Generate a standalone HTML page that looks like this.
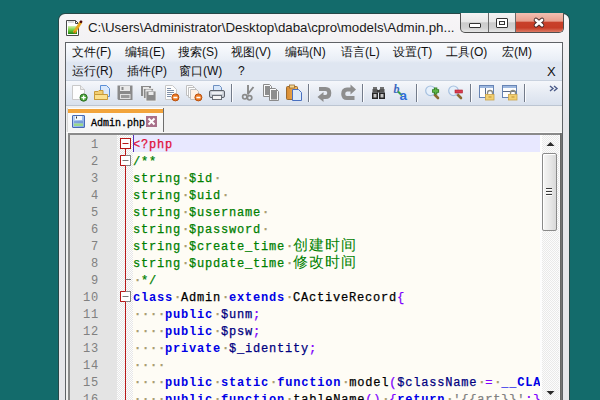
<!DOCTYPE html>
<html><head><meta charset="utf-8">
<style>
*{box-sizing:border-box;}
html,body{margin:0;padding:0;}
body{width:600px;height:400px;overflow:hidden;background:#136b6b;position:relative;font-family:"Liberation Sans",sans-serif;}
.abs{position:absolute;}
svg{position:absolute;overflow:visible;}
#win{position:absolute;left:58px;top:13px;width:512px;height:400px;border:1px solid #274848;border-bottom:none;border-radius:7px 7px 0 0;background:linear-gradient(#f7f5f7,#f1f0f2 40px,#e6e6ea 110px);}
#client{position:absolute;left:65px;top:42px;width:498px;height:370px;border:1px solid #5f6266;background:#f0f0f0;}
#menu{position:absolute;left:66px;top:43px;width:496px;height:37px;background:linear-gradient(#fbfcfe 0px,#e9eef6 17px,#dfe6f1 20px,#dfe6f1 38px);}
.mi{position:absolute;font-size:12px;line-height:17px;color:#111;white-space:nowrap;}
#tb{position:absolute;left:66px;top:80px;width:496px;height:26px;background:linear-gradient(#f5f7fb,#e6ebf3 50%,#d9e1ed);border-top:1px solid #c9d2df;border-bottom:1px solid #bcc5d2;}
.sep{position:absolute;top:84px;width:1px;height:18px;background:#737b8a;box-shadow:1px 0 0 #fbfcfe;}
#tabbar{position:absolute;left:66px;top:106px;width:496px;height:28px;background:#f0f0f0;}
#tab{position:absolute;left:67px;top:108px;width:97px;height:24px;background:linear-gradient(#fdfdfd,#f4f4f4);border-right:1px solid #6d6d6d;border-left:1px solid #d8d8d8;}
#tabo{position:absolute;left:68px;top:109px;width:95px;height:4px;background:#f2a43c;}
#editor{position:absolute;left:68px;top:133px;width:494px;height:280px;border-top:2px solid #8a8a8a;border-left:2px solid #8a8a8a;background:#fefcf5;}
#lnm{position:absolute;left:70px;top:135px;width:47px;height:270px;background:#e4e4e4;}
#fold{position:absolute;left:117px;top:135px;width:16px;height:270px;background:repeating-conic-gradient(#e6e6e6 0 25%,#fdfdfd 0 50%) 0 0/2px 2px;}
#hl{position:absolute;left:133px;top:135px;width:407px;height:17px;background:#e8e8ff;}
#caret{position:absolute;left:133px;top:135px;width:1px;height:17px;background:#5530b8;}
.ln{position:absolute;left:68px;width:31px;margin-top:2px;line-height:17px;text-align:right;font-family:"Liberation Mono",monospace;font-size:12px;letter-spacing:0.8px;color:#808080;}
#code{position:absolute;left:0;top:0;width:542px;height:400px;overflow:hidden;}
.cl{position:absolute;left:133px;margin-top:2px;line-height:17px;font-family:"Liberation Mono",monospace;font-size:12px;letter-spacing:0.8px;white-space:pre;color:#000;-webkit-text-stroke:0.25px currentColor;}
.c{color:#008000}
.k{color:#0000e6;font-weight:bold;-webkit-text-stroke:0}
.v{color:#000080}
.o{color:#8000ff}
.s{color:#808080}
.t{color:#e0103a}
.w{color:#a89c70;position:relative;left:1px;font-weight:bold}
.cj{-webkit-text-stroke:0;font-family:"Liberation Sans",sans-serif;font-size:15px;letter-spacing:1px;line-height:10px;vertical-align:top;position:relative;top:1px;}
#sb{position:absolute;left:540px;top:135px;width:20px;height:270px;background:repeating-conic-gradient(#e9e9e9 0 25%,#fcfcfc 0 50%) 0 0/2px 2px;border-left:2px solid #fdfdfd;border-right:1px solid #fafafa;}
#edr{position:absolute;left:560px;top:133px;width:2px;height:270px;background:linear-gradient(to right,#5e5e5e,#7c7c7c);}
#thumb{position:absolute;left:542px;top:153px;width:15px;height:78px;border:1px solid #8a8a8a;border-radius:2px;background:linear-gradient(to right,#f6f6f6,#e9e9e9 50%,#d9d9d9);box-shadow:inset 1px 1px 0 #fff;}
.grip{position:absolute;left:546px;width:6px;height:1px;background:#3a3a3a;box-shadow:0 1px 0 #fff;}
</style></head><body>
<div id="win"></div>
<!-- title icon -->
<svg style="left:66px;top:20px" width="17" height="16" viewBox="0 0 17 16">
<defs><linearGradient id="tg" x1="0" y1="0" x2="0" y2="1"><stop offset="0" stop-color="#d8f0b0"/><stop offset="0.5" stop-color="#70d040"/><stop offset="1" stop-color="#208010"/></linearGradient></defs>
<path d="M0.5 0.5 H9.5 L12.5 3.5 V15.5 H0.5 Z" fill="#fff" stroke="#4a4a4a"/>
<path d="M9.5 0.5 V3.5 H12.5" fill="none" stroke="#4a4a4a"/>
<path d="M2.5 2 H3.5 M4.5 2 H5.5 M6.5 2 H7.5" stroke="#777" stroke-width="1"/>
<rect x="2" y="6" width="9" height="8" fill="url(#tg)"/>
<path d="M8 12.8 L14.8 2.2" stroke="#e8a820" stroke-width="3"/>
<path d="M8 13.3 L9.2 11.3" stroke="#c07010" stroke-width="1.2"/>
<circle cx="15" cy="1.8" r="1.4" fill="#500808"/>
</svg>
<div class="abs" style="left:88px;top:20px;font-size:13.3px;line-height:16px;color:#1a1a1a;white-space:nowrap;">C:\Users\Administrator\Desktop\daba\cpro\models\Admin.ph...</div>
<!-- caption buttons -->
<div class="abs" style="left:460px;top:13px;width:104px;height:20px;border:1px solid #4f4f4f;border-top:none;border-radius:0 0 5px 5px;overflow:hidden;background:linear-gradient(#f4f4f4,#e8e8e8 45%,#cbcbcb 52%,#d2d2d2 80%,#e6e6e6);">
<div class="abs" style="left:27px;top:0;width:1px;height:19px;background:#6a6a6a;"></div>
<div class="abs" style="left:54px;top:0;width:1px;height:19px;background:#6a6a6a;"></div>
<div class="abs" style="left:55px;top:0;width:48px;height:19px;background:linear-gradient(#f2c0b2,#e8a08e 42%,#c8402a 50%,#c63c26 78%,#de7a64);"></div>
</div>
<div class="abs" style="left:469px;top:23px;width:12px;height:5px;border:1px solid #333;background:#fff;border-radius:1px;"></div>
<div class="abs" style="left:496px;top:18px;width:12px;height:10px;border:1px solid #333;background:#fff;border-radius:1px;"></div>
<div class="abs" style="left:499px;top:21px;width:6px;height:4px;border:1px solid #333;background:#f4f4f4;"></div>
<svg style="left:533px;top:17px" width="12" height="11" viewBox="0 0 12 11">
<path d="M3 3 L9 8.2 M9 3 L3 8.2" stroke="#4a2a2a" stroke-width="4.6" stroke-linecap="round"/>
<path d="M3 3 L9 8.2 M9 3 L3 8.2" stroke="#fff" stroke-width="2.8" stroke-linecap="round"/>
</svg>
<div id="client"></div>
<div id="menu"></div>
<div class="mi" style="left:72px;top:44px">文件(F)</div>
<div class="mi" style="left:125px;top:44px">编辑(E)</div>
<div class="mi" style="left:178px;top:44px">搜索(S)</div>
<div class="mi" style="left:231px;top:44px">视图(V)</div>
<div class="mi" style="left:285px;top:44px">编码(N)</div>
<div class="mi" style="left:341px;top:44px">语言(L)</div>
<div class="mi" style="left:393px;top:44px">设置(T)</div>
<div class="mi" style="left:446px;top:44px">工具(O)</div>
<div class="mi" style="left:502px;top:44px">宏(M)</div>
<div class="mi" style="left:72px;top:63px">运行(R)</div>
<div class="mi" style="left:127px;top:63px">插件(P)</div>
<div class="mi" style="left:179px;top:63px">窗口(W)</div>
<div class="mi" style="left:238px;top:63px">?</div>
<div class="mi" style="left:547px;top:63px;font-size:13px">X</div>
<div id="tb"></div>
<!-- new -->
<svg style="left:71px;top:84px" width="17" height="17" viewBox="0 0 17 17">
<path d="M1.5 1.5 H9.5 L13.5 5.5 V15.5 H1.5 Z" fill="#fdfdfd" stroke="#c9c9c9"/>
<path d="M9.5 1.5 V5.5 H13.5" fill="#ececec" stroke="#c9c9c9"/>
<circle cx="12.6" cy="13.6" r="3.6" fill="#4aa83a" stroke="#2f6e24"/>
<path d="M12.6 11.4 V15.8 M10.4 13.6 H14.8" stroke="#fff" stroke-width="1.4"/>
</svg>
<!-- open -->
<svg style="left:93px;top:84px" width="18" height="17" viewBox="0 0 18 17">
<path d="M7.5 1.5 H13.5 L16.5 4.5 V12.5 H7.5 Z" fill="#d9e8fb" stroke="#5b8fd6"/>
<path d="M1.5 7.5 H5 L6 6.5 H10 V15.5 H1.5 Z" fill="#f3cf72" stroke="#c89a3a"/>
<path d="M1.5 10.5 H14.5 V15.5 H1.5 Z" fill="#fbe08e" stroke="#c89a3a"/>
</svg>
<!-- save (disabled) -->
<svg style="left:117px;top:84px" width="17" height="17" viewBox="0 0 17 17">
<path d="M0.5 1.5 H15.5 V16 H1.5 L0.5 15 Z" fill="#8a8a8a"/>
<rect x="3" y="2" width="10" height="5" fill="#e9e9e9"/>
<rect x="4.5" y="3" width="2" height="3" fill="#8a8a8a"/>
<rect x="3" y="10" width="10.5" height="5" fill="#e2e2e2"/>
<rect x="4" y="11" width="8.5" height="3" fill="#9a9a9a"/>
</svg>
<!-- save all -->
<svg style="left:140px;top:84px" width="17" height="17" viewBox="0 0 17 17">
<rect x="1" y="2" width="10" height="10" fill="#8a8a8a"/>
<rect x="3" y="3" width="6" height="2" fill="#e9e9e9"/>
<rect x="3.5" y="4.5" width="10" height="10" fill="#8a8a8a" stroke="#f0f0f0" stroke-width="0.8"/>
<rect x="5.5" y="5.5" width="6" height="2" fill="#e9e9e9"/>
<rect x="6" y="7" width="10" height="10" fill="#8a8a8a" stroke="#f0f0f0" stroke-width="0.8"/>
<rect x="8.5" y="8" width="5" height="3" fill="#e9e9e9"/>
</svg>
<!-- close -->
<svg style="left:163px;top:84px" width="17" height="17" viewBox="0 0 17 17">
<path d="M2.5 1.5 H9.5 L13.5 5.5 V15.5 H2.5 Z" fill="#fdfdfd" stroke="#c8c8c8"/>
<path d="M4 4.5 H8 M4 6.5 H11 M4 8.5 H11 M4 10.5 H9 M4 12.5 H8" stroke="#8090a8" stroke-width="1"/>
<circle cx="12.4" cy="13.4" r="3.5" fill="#ee7a22" stroke="#b8500f"/>
<path d="M10.4 13.5 H14.4" stroke="#fff" stroke-width="1.6"/>
</svg>
<!-- close all -->
<svg style="left:185px;top:84px" width="17" height="17" viewBox="0 0 17 17">
<path d="M1.5 1.5 H7.5 L9.5 3.5 V11.5 H1.5 Z" fill="#fdfdfd" stroke="#c0c0c0"/>
<path d="M3.5 3.5 H9.5 L11.5 5.5 V13.5 H3.5 Z" fill="#fdfdfd" stroke="#c0c0c0"/>
<path d="M5.5 5.5 H11.5 L13.5 7.5 V15.5 H5.5 Z" fill="#fdf0e4" stroke="#c0c0c0"/>
<circle cx="13.4" cy="13.4" r="3.5" fill="#ee7a22" stroke="#b8500f"/>
<path d="M11.4 13.5 H15.4" stroke="#fff" stroke-width="1.6"/>
</svg>
<!-- print -->
<svg style="left:209px;top:84px" width="17" height="17" viewBox="0 0 17 17">
<path d="M4.5 1.5 H10.5 L12.5 3.5 V7 H4.5 Z" fill="#d6e6fa" stroke="#6d8fc0"/>
<rect x="0.5" y="6.5" width="15" height="7" rx="1.5" fill="#c9ced6" stroke="#5e636b"/>
<rect x="2.5" y="8" width="11" height="2" fill="#eef0f3"/>
<rect x="3.5" y="11.5" width="9" height="4" fill="#f4f4f4" stroke="#6a6f77"/>
</svg>
<div class="sep" style="left:231px"></div>
<!-- cut -->
<svg style="left:240px;top:84px" width="17" height="17" viewBox="0 0 17 17">
<path d="M8 1 V10.5 M13.5 3 L7.5 10.5" stroke="#8a8a8a" stroke-width="1.9"/>
<circle cx="4.8" cy="12.8" r="2.2" fill="none" stroke="#8a8a8a" stroke-width="1.7"/>
<circle cx="9.6" cy="13.8" r="2.2" fill="none" stroke="#8a8a8a" stroke-width="1.7"/>
</svg>
<!-- copy -->
<svg style="left:263px;top:84px" width="17" height="17" viewBox="0 0 17 17">
<path d="M0.5 0.5 H6.5 L8.5 2.5 V12.5 H0.5 Z" fill="#fafafa" stroke="#8a8a8a"/>
<rect x="2" y="2" width="5" height="9" fill="#8e8e8e"/>
<path d="M6.5 4.5 H12.5 L15.5 7.5 V16.5 H6.5 Z" fill="#fafafa" stroke="#8a8a8a"/>
<rect x="8" y="6" width="6" height="9.5" fill="#8e8e8e"/>
</svg>
<!-- paste -->
<svg style="left:286px;top:84px" width="17" height="17" viewBox="0 0 17 17">
<defs><linearGradient id="pg" x1="0" x2="1"><stop offset="0" stop-color="#d88a30"/><stop offset="1" stop-color="#f2b860"/></linearGradient></defs>
<rect x="0.5" y="2.5" width="11" height="13" rx="1" fill="url(#pg)" stroke="#9a6a30"/>
<rect x="3.5" y="1" width="5" height="3" fill="#f6d890" stroke="#9a6a30" stroke-width="0.8"/>
<path d="M6.5 5.5 H12.5 L15.5 8.5 V16.5 H6.5 Z" fill="#dceafa" stroke="#4a70c0"/>
</svg>
<div class="sep" style="left:308px"></div>
<!-- undo -->
<svg style="left:317px;top:84px" width="17" height="17" viewBox="0 0 17 17">
<path d="M2 5 H8.5 Q12.3 5 12.3 9 Q12.3 13 8.5 13 H6" fill="none" stroke="#8e8e8e" stroke-width="4"/>
<path d="M0.5 13 L6.5 8 V18 Z" fill="#8e8e8e"/>
</svg>
<!-- redo -->
<svg style="left:340px;top:84px" width="17" height="17" viewBox="0 0 17 17">
<path d="M14.5 14 H7 Q3.2 14 3.2 10 Q3.2 5.5 7 5.5 H11" fill="none" stroke="#8e8e8e" stroke-width="4"/>
<path d="M16 5.5 L10.5 0.5 V10.5 Z" fill="#8e8e8e"/>
</svg>
<div class="sep" style="left:362px"></div>
<!-- find -->
<svg style="left:371px;top:84px" width="17" height="17" viewBox="0 0 17 17">
<rect x="2" y="3" width="4" height="2.5" fill="#707070"/>
<rect x="9" y="3" width="4" height="2.5" fill="#707070"/>
<rect x="1.5" y="5" width="5" height="3.5" fill="#555"/>
<rect x="8.5" y="5" width="5" height="3.5" fill="#555"/>
<rect x="6" y="6" width="3" height="2.5" fill="#3a3a3a"/>
<rect x="1" y="8.5" width="6" height="6.5" fill="#262626"/>
<rect x="8" y="8.5" width="6" height="6.5" fill="#262626"/>
<rect x="2.5" y="10" width="3" height="3.5" fill="#c4c4c4"/>
<rect x="9.5" y="10" width="3" height="3.5" fill="#c4c4c4"/>
</svg>
<!-- replace -->
<svg style="left:393px;top:84px" width="18" height="17" viewBox="0 0 18 17">
<text x="0.5" y="9" font-family="Liberation Serif" font-style="italic" font-weight="bold" font-size="12" fill="#3a68c0">b</text>
<path d="M5 7.5 L9 11.5" stroke="#3aa040" stroke-width="2"/>
<text x="6.6" y="16.4" font-family="Liberation Sans" font-weight="bold" font-size="13.5" fill="#2e6ed8">a</text>
</svg>
<div class="sep" style="left:416px"></div>
<!-- zoom in -->
<svg style="left:425px;top:84px" width="17" height="17" viewBox="0 0 17 17">
<path d="M9 10 L13 14" stroke="#8a6a30" stroke-width="2.6" stroke-linecap="round"/>
<circle cx="5.5" cy="6.8" r="4.8" fill="#e6f0fb" stroke="#a6c0e0" stroke-width="1.2"/>
<path d="M10.6 3.5 V10.5 M7.1 7 H14.1" stroke="#2f7a20" stroke-width="3.4"/>
<path d="M10.6 4.3 V9.7 M7.9 7 H13.3" stroke="#5cb448" stroke-width="1.8"/>
</svg>
<!-- zoom out -->
<svg style="left:448px;top:84px" width="17" height="17" viewBox="0 0 17 17">
<path d="M9 10 L13 14" stroke="#8a6a30" stroke-width="2.6" stroke-linecap="round"/>
<circle cx="5.5" cy="6.8" r="4.8" fill="#e6f0fb" stroke="#a6c0e0" stroke-width="1.2"/>
<rect x="7" y="6" width="7.5" height="3" fill="#d83c50" stroke="#b02030" stroke-width="0.6"/>
</svg>
<div class="sep" style="left:470px"></div>
<!-- sync v -->
<svg style="left:479px;top:84px" width="17" height="17" viewBox="0 0 17 17">
<rect x="0.5" y="1.5" width="14" height="12" fill="#fdfdfd" stroke="#6784b4"/>
<rect x="1" y="2" width="13" height="2" fill="#9db8e0"/>
<path d="M6.5 4 V13" stroke="#5a6a88"/>
<path d="M8.5 10.5 V9 A2.5 2.5 0 0 1 13.5 9 V10.5" fill="none" stroke="#8a8a80" stroke-width="1.3"/>
<rect x="6.5" y="10.5" width="8.5" height="5.5" fill="#f3d070" stroke="#caa44a" stroke-width="0.8"/>
<rect x="9.5" y="12" width="3" height="2" fill="#d8b050"/>
</svg>
<!-- sync h -->
<svg style="left:502px;top:84px" width="17" height="17" viewBox="0 0 17 17">
<rect x="0.5" y="1.5" width="14" height="12" fill="#fdfdfd" stroke="#6784b4"/>
<rect x="1" y="2" width="13" height="2" fill="#9db8e0"/>
<path d="M1 7.5 H14" stroke="#5a6a88"/>
<path d="M8.5 10.5 V9 A2.5 2.5 0 0 1 13.5 9 V10.5" fill="none" stroke="#8a8a80" stroke-width="1.3"/>
<rect x="6.5" y="10.5" width="8.5" height="5.5" fill="#f3d070" stroke="#caa44a" stroke-width="0.8"/>
<rect x="9.5" y="12" width="3" height="2" fill="#d8b050"/>
</svg>
<div class="sep" style="left:524px"></div>
<svg style="left:549px;top:85px" width="10" height="7" viewBox="0 0 10 7">
<path d="M1 1 L4 3.5 L1 6 M5 1 L8 3.5 L5 6" fill="none" stroke="#4a5a88" stroke-width="1.4"/>
</svg>

<div id="tabbar"></div>
<div class="abs" style="left:66px;top:132px;width:496px;height:1px;background:#fbfbfb;"></div>
<div id="tab"></div>
<div id="tabo"></div>
<svg style="left:72px;top:115px" width="13" height="13" viewBox="0 0 13 13">
<defs><linearGradient id="fg" x1="0" y1="0" x2="1" y2="1"><stop offset="0" stop-color="#c4dcfa"/><stop offset="1" stop-color="#7ea6e2"/></linearGradient></defs>
<rect x="0.5" y="0.5" width="12" height="12" rx="0.5" fill="url(#fg)" stroke="#4768b4"/>
<rect x="3" y="1" width="7" height="4" fill="#f4f8fe"/>
<rect x="4" y="1.5" width="1" height="2" fill="#333"/>
<rect x="2" y="6.5" width="9" height="1" fill="#5a80c8"/>
<rect x="2" y="8.5" width="9" height="2.5" fill="#9ad888"/>
</svg>
<div class="abs" style="left:91px;top:117px;font-family:'Liberation Mono',monospace;font-size:10px;line-height:14px;color:#000;font-weight:normal;-webkit-text-stroke:0.3px #000;">Admin.php</div>
<div class="abs" style="left:146px;top:116px;width:11px;height:11px;background:#a9708a;"></div>
<svg style="left:146px;top:116px" width="11" height="11" viewBox="0 0 11 11"><path d="M2.5 2.5 L8.5 8.5 M8.5 2.5 L2.5 8.5" stroke="#fff" stroke-width="2"/></svg>
<div id="editor"></div>
<div id="lnm"></div>
<div id="fold"></div>
<div id="hl"></div>
<div id="code">
<div class="ln" style="top:135px">1</div><div class="cl" style="top:135px"><span class="t">&lt;?php</span></div>
<div class="ln" style="top:152px">2</div><div class="cl" style="top:152px"><span class="c">/**</span></div>
<div class="ln" style="top:169px">3</div><div class="cl" style="top:169px"><span class="c">string<span class="w">·</span>$id<span class="w">·</span></span></div>
<div class="ln" style="top:186px">4</div><div class="cl" style="top:186px"><span class="c">string<span class="w">·</span>$uid<span class="w">·</span></span></div>
<div class="ln" style="top:203px">5</div><div class="cl" style="top:203px"><span class="c">string<span class="w">·</span>$username<span class="w">·</span></span></div>
<div class="ln" style="top:220px">6</div><div class="cl" style="top:220px"><span class="c">string<span class="w">·</span>$password<span class="w">·</span></span></div>
<div class="ln" style="top:237px">7</div><div class="cl" style="top:237px"><span class="c">string<span class="w">·</span>$create_time<span class="w">·</span><span class="cj">创建时间</span></span></div>
<div class="ln" style="top:254px">8</div><div class="cl" style="top:254px"><span class="c">string<span class="w">·</span>$update_time<span class="w">·</span><span class="cj">修改时间</span></span></div>
<div class="ln" style="top:271px">9</div><div class="cl" style="top:271px"><span class="c"><span class="w">·</span>*/</span></div>
<div class="ln" style="top:288px">10</div><div class="cl" style="top:288px"><span class="k">class</span><span class="w">·</span>Admin<span class="w">·</span><span class="k">extends</span><span class="w">·</span>CActiveRecord<span class="o">{</span></div>
<div class="ln" style="top:305px">11</div><div class="cl" style="top:305px"><span class="w">·</span><span class="w">·</span><span class="w">·</span><span class="w">·</span><span class="k">public</span><span class="w">·</span><span class="v">$unm</span><span class="o">;</span></div>
<div class="ln" style="top:322px">12</div><div class="cl" style="top:322px"><span class="w">·</span><span class="w">·</span><span class="w">·</span><span class="w">·</span><span class="k">public</span><span class="w">·</span><span class="v">$psw</span><span class="o">;</span></div>
<div class="ln" style="top:339px">13</div><div class="cl" style="top:339px"><span class="w">·</span><span class="w">·</span><span class="w">·</span><span class="w">·</span><span class="k">private</span><span class="w">·</span><span class="v">$_identity</span><span class="o">;</span></div>
<div class="ln" style="top:356px">14</div><div class="cl" style="top:356px"><span class="w">·</span><span class="w">·</span><span class="w">·</span><span class="w">·</span></div>
<div class="ln" style="top:373px">15</div><div class="cl" style="top:373px"><span class="w">·</span><span class="w">·</span><span class="w">·</span><span class="w">·</span><span class="k">public</span><span class="w">·</span><span class="k">static</span><span class="w">·</span><span class="k">function</span><span class="w">·</span>model<span class="o">(</span><span class="v">$className</span><span class="w">·</span><span class="o">=</span><span class="w">·</span><span class="k">__CLASS__</span><span class="o">)</span></div>
<div class="ln" style="top:390px">16</div><div class="cl" style="top:390px"><span class="w">·</span><span class="w">·</span><span class="w">·</span><span class="w">·</span><span class="k">public</span><span class="w">·</span><span class="k">function</span><span class="w">·</span>tableName<span class="o">()</span><span class="w">·</span><span class="o">{</span><span class="k">return</span><span class="w">·</span><span class="s">'{{art}}'</span><span class="o">;}</span></div>

</div>
<div id="caret"></div>
<!-- fold markers -->
<svg style="left:117px;top:135px" width="16" height="265" viewBox="0 0 16 265">
<path d="M8.5 14 V265" stroke="#b81818" stroke-width="1"/>
<rect x="3.5" y="3.5" width="10" height="10" fill="#fff" stroke="#b81818"/>
<path d="M5.5 8.5 H11.5" stroke="#b81818"/>
<rect x="3.5" y="20.5" width="10" height="10" fill="#fff" stroke="#888"/>
<path d="M8.5 20.5 H3.5 V30.5 H8.5" fill="none" stroke="#b81818"/>
<path d="M5.5 25.5 H11.5" stroke="#777"/>
<path d="M8.5 144.5 H14" stroke="#777"/>
<rect x="3.5" y="156.5" width="10" height="10" fill="#fff" stroke="#888"/>
<path d="M8.5 156.5 H3.5 V166.5 H8.5" fill="none" stroke="#b81818"/>
<path d="M5.5 161.5 H11.5" stroke="#777"/>
<path d="M8.5 167 V265" stroke="#b81818"/>
</svg>
<div id="sb"></div>
<div id="edr"></div>
<svg style="left:546px;top:141px" width="9" height="6" viewBox="0 0 9 6"><path d="M0.5 5 L4.5 1 L8.5 5 Z" fill="#2a2a2a"/></svg>
<div id="thumb"></div>
<div class="grip" style="top:188px"></div>
<div class="grip" style="top:191px"></div>
<div class="grip" style="top:194px"></div>
<svg style="left:546px;top:390px" width="9" height="6" viewBox="0 0 9 6"><path d="M0.5 1 L4.5 5 L8.5 1 Z" fill="#2a2a2a"/></svg>
</body></html>
